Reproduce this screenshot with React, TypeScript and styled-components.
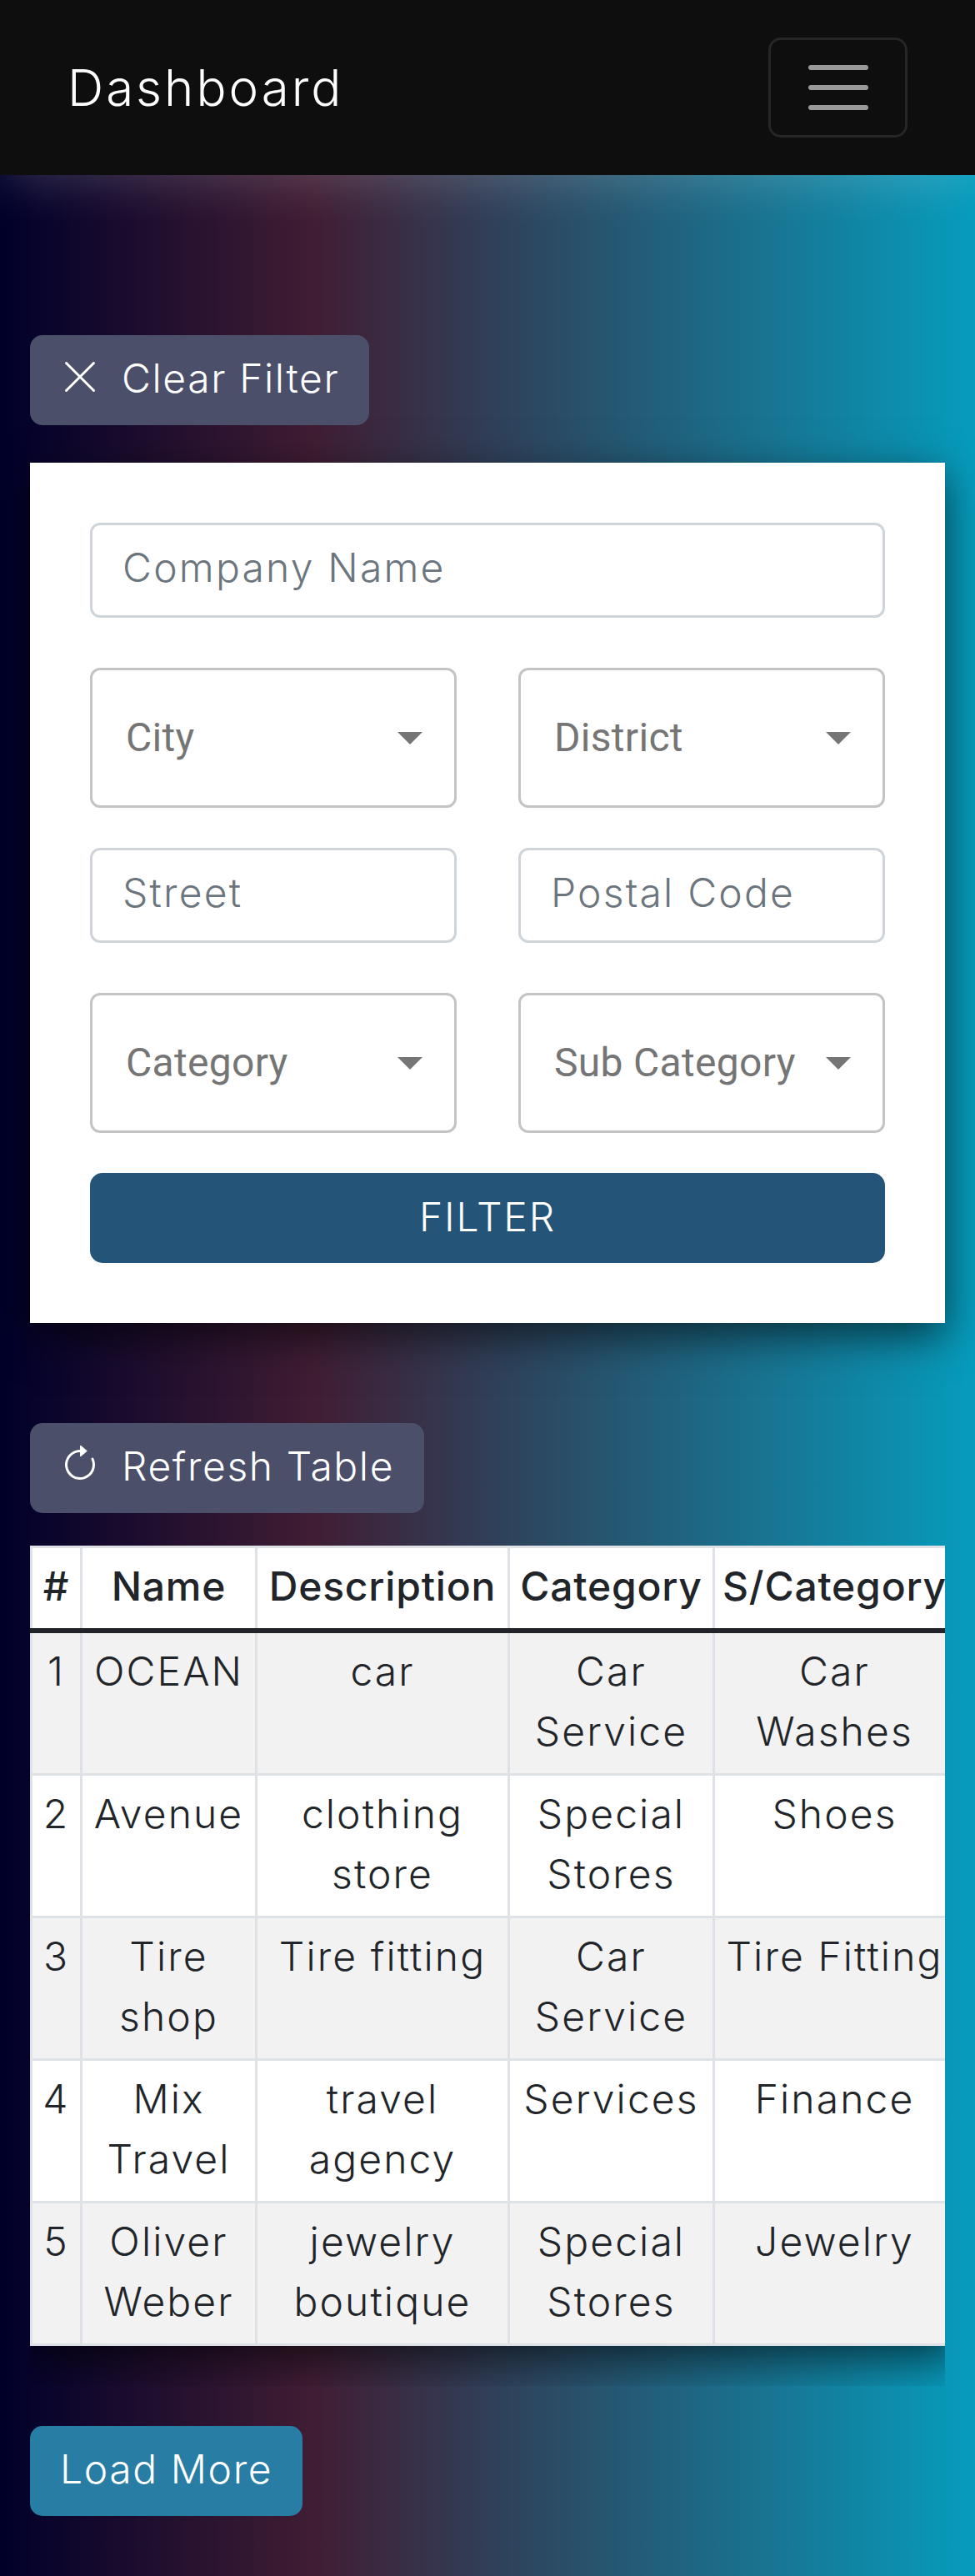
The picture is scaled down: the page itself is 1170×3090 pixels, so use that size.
import React from 'react';
import styled, { createGlobalStyle } from 'styled-components';

const GlobalStyle = createGlobalStyle`
	* {
		box-sizing: border-box;
	}
	html, body {
		margin: 0;
		padding: 0;
	}
	body {
		min-height: 3090px;
		font-family: Inter, "Liberation Sans", sans-serif;
		font-size: 48px;
		line-height: 72px;
		color: #212529;
		background: linear-gradient(to right, #00002a 0%, #401d33 32%, #069cbd 100%);
	}
`;

const Navbar = styled.nav`
	position: relative;
	height: 210px;
	padding: 0 81px 0 81px;
	display: flex;
	align-items: center;
	justify-content: space-between;
	background: #0e0e0e;
	box-shadow: 0 0 60px rgba(255, 255, 255, 0.22);
`;

const Brand = styled.div`
	font-size: 60px;
	font-weight: 300;
	letter-spacing: 3px;
	color: #fff;
`;

const Toggler = styled.button`
	width: 167px;
	height: 120px;
	padding: 0;
	display: flex;
	flex-direction: column;
	align-items: center;
	justify-content: center;
	gap: 18px;
	background: transparent;
	border: 3px solid rgba(255, 255, 255, 0.1);
	border-radius: 15px;
`;

const TogglerBar = styled.span`
	width: 72px;
	height: 6px;
	border-radius: 3px;
	background: #999;
`;

const Main = styled.main`
	padding: 192px 36px 72px;
`;

const ActionButton = styled.button<{ $bg: string }>`
	height: 108px;
	padding: 0 36px 4px;
	display: inline-flex;
	align-items: center;
	gap: 26px;
	border: 0;
	border-radius: 15px;
	background: ${p => p.$bg};
	color: #fff;
	font-family: inherit;
	font-size: 48px;
	font-weight: 300;
	letter-spacing: 1.6px;
	line-height: 72px;
`;

const ButtonIcon = styled.svg`
	width: 48px;
	height: 48px;
	margin-top: -4px;
	fill: currentColor;
`;

const FilterCard = styled.form`
	margin-top: 45px;
	padding: 72px;
	background: #fff;
	box-shadow: 0 16px 48px rgba(0, 0, 0, 0.6);
`;

const FieldRow = styled.div<{ $mt: number }>`
	margin-top: ${p => p.$mt}px;
	display: grid;
	grid-template-columns: 1fr 1fr;
	column-gap: 74px;
`;

const TextField = styled.input`
	display: block;
	width: 100%;
	height: 114px;
	padding: 14px 36px 22px;
	border: 3px solid #ced4da;
	border-radius: 12px;
	background: #fff;
	font-family: inherit;
	font-size: 48px;
	font-weight: 300;
	letter-spacing: 2.2px;
	outline: none;

	&::placeholder {
		color: #6c757d;
		opacity: 1;
	}
`;

const SelectBox = styled.div`
	height: 168px;
	padding: 0 38px 0 40px;
	display: flex;
	align-items: center;
	justify-content: space-between;
	border: 3px solid #c4c4c4;
	border-radius: 12px;
	font-family: Roboto, "Liberation Sans", sans-serif;
	font-size: 48px;
	letter-spacing: 0.3px;
	color: #757575;
`;

const SelectArrow = styled.span`
	width: 0;
	height: 0;
	border-left: 15px solid transparent;
	border-right: 15px solid transparent;
	border-top: 15px solid #757575;
`;

const FilterButton = styled.button`
	display: block;
	width: 100%;
	height: 108px;
	margin-top: 48px;
	padding: 0 0 4px;
	border: 0;
	border-radius: 15px;
	background: #245579;
	color: #fff;
	font-family: inherit;
	font-size: 48px;
	font-weight: 300;
	letter-spacing: 1.9px;
`;

const RefreshRow = styled.div`
	margin-top: 120px;
`;

const TableWrap = styled.div`
	margin-top: 39px;
	padding-bottom: 48px;
	overflow: hidden;
`;

const DataTable = styled.table`
	width: 1109px;
	table-layout: fixed;
	border-collapse: collapse;
	background: #fff;
	box-shadow: 0 16px 48px rgba(0, 0, 0, 0.6);
`;

const HeadCell = styled.th`
	padding: 10px 0 14px;
	border: 3px solid #dee2e6;
	border-bottom: 6px solid #212529;
	font-weight: 500;
	white-space: nowrap;
	letter-spacing: 0.8px;
	text-align: center;
`;

const BodyRow = styled.tr<{ $striped: boolean }>`
	background: ${p => (p.$striped ? '#f2f2f2' : '#fff')};
`;

const BodyCell = styled.td`
	padding: 10px 0 14px;
	border: 3px solid #dee2e6;
	font-weight: 300;
	letter-spacing: 2.1px;
	white-space: pre-line;
	text-align: center;
	vertical-align: top;
`;

const LoadMoreRow = styled.div`
	margin-top: 48px;
`;

const columns = [
	{ label: '#', width: 60 },
	{ label: 'Name', width: 210 },
	{ label: 'Description', width: 303 },
	{ label: 'Category', width: 246 },
	{ label: 'S/Category', width: 290 },
];

const rows = [
	['1', 'OCEAN', 'car', 'Car\nService', 'Car\nWashes'],
	['2', 'Avenue', 'clothing\nstore', 'Special\nStores', 'Shoes'],
	['3', 'Tire\nshop', 'Tire fitting', 'Car\nService', 'Tire Fitting'],
	['4', 'Mix\nTravel', 'travel\nagency', 'Services', 'Finance'],
	['5', 'Oliver\nWeber', 'jewelry\nboutique', 'Special\nStores', 'Jewelry'],
];

const App: React.FC = () => {
	return (
		<>
			<GlobalStyle />
			<Navbar>
				<Brand>Dashboard</Brand>
				<Toggler type="button" aria-label="Toggle navigation">
					<TogglerBar />
					<TogglerBar />
					<TogglerBar />
				</Toggler>
			</Navbar>
			<Main>
				<ActionButton type="button" $bg="#4b4f69">
					<ButtonIcon viewBox="0 0 16 16">
						<path d="M13.854 2.146a.5.5 0 0 1 0 .708l-11 11a.5.5 0 0 1-.708-.708l11-11a.5.5 0 0 1 .708 0Z" />
						<path d="M2.146 2.146a.5.5 0 0 0 0 .708l11 11a.5.5 0 0 0 .708-.708l-11-11a.5.5 0 0 0-.708 0Z" />
					</ButtonIcon>
					Clear Filter
				</ActionButton>

				<FilterCard>
					<TextField placeholder="Company Name" />
					<FieldRow $mt={60}>
						<SelectBox>City<SelectArrow /></SelectBox>
						<SelectBox>District<SelectArrow /></SelectBox>
					</FieldRow>
					<FieldRow $mt={48}>
						<TextField placeholder="Street" />
						<TextField placeholder="Postal Code" />
					</FieldRow>
					<FieldRow $mt={60}>
						<SelectBox>Category<SelectArrow /></SelectBox>
						<SelectBox>Sub Category<SelectArrow /></SelectBox>
					</FieldRow>
					<FilterButton type="button">FILTER</FilterButton>
				</FilterCard>

				<RefreshRow>
					<ActionButton type="button" $bg="#4b4f69">
						<ButtonIcon viewBox="0 0 16 16">
							<path fillRule="evenodd" d="M8 3a5 5 0 1 0 4.546 2.914.5.5 0 0 1 .908-.417A6 6 0 1 1 8 2v1z" />
							<path d="M8 4.466V.534a.25.25 0 0 1 .41-.192l2.36 1.966c.12.1.12.284 0 .384L8.41 4.658A.25.25 0 0 1 8 4.466z" />
						</ButtonIcon>
						Refresh Table
					</ActionButton>
				</RefreshRow>

				<TableWrap>
					<DataTable>
						<colgroup>
							{columns.map(c => <col key={c.label} width={c.width} />)}
						</colgroup>
						<thead>
							<tr>
								{columns.map(c => <HeadCell key={c.label}>{c.label}</HeadCell>)}
							</tr>
						</thead>
						<tbody>
							{rows.map((row, i) => (
								<BodyRow key={row[0]} $striped={i % 2 === 0}>
									{row.map((cell, j) => <BodyCell key={j}>{cell}</BodyCell>)}
								</BodyRow>
							))}
						</tbody>
					</DataTable>
				</TableWrap>

				<LoadMoreRow>
					<ActionButton type="button" $bg="#287da4">Load More</ActionButton>
				</LoadMoreRow>
			</Main>
		</>
	);
};

export default App;
